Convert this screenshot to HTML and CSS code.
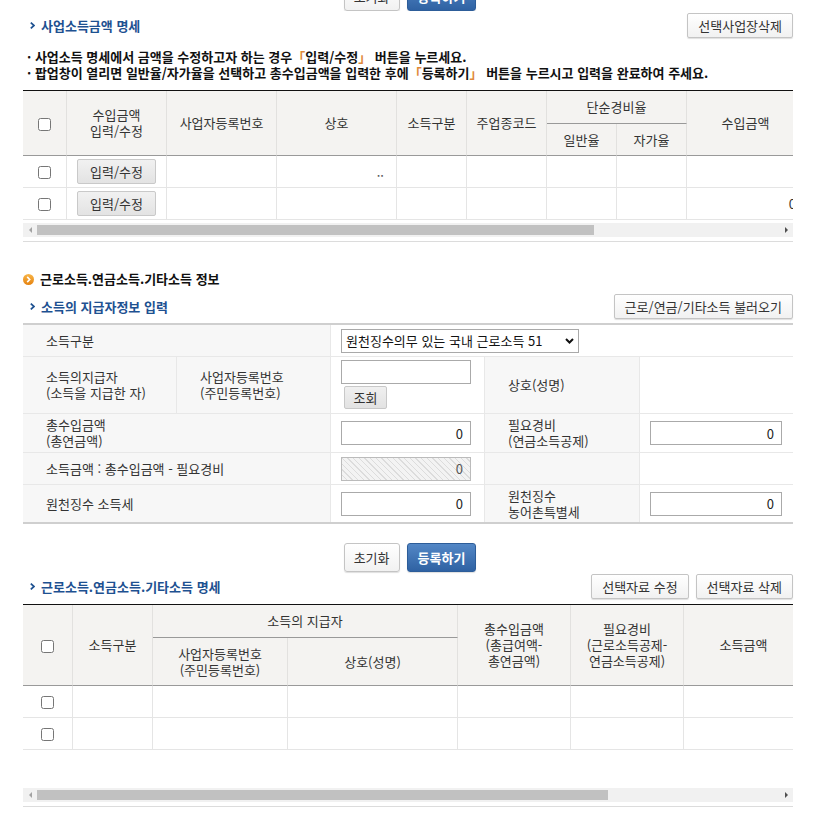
FILE: index.html
```html
<!DOCTYPE html>
<html lang="ko">
<head>
<meta charset="utf-8">
<title>소득금액 입력</title>
<link rel="stylesheet" href="styles.css">
</head>
<body>
<div class="page">
  <div class="btn-center cut">
    <button class="btn btn-lg">초기화</button>
    <button class="btn btn-lg btn-blue">등록하기</button>
  </div>

  <div class="sub-head">
    <h3 class="sub-title"><svg class="chev" width="5" height="7" viewBox="0 0 5 7"><path d="M0.8 0.6L4 3.5L0.8 6.4" fill="none" stroke="#1e5191" stroke-width="1.7"/></svg>사업소득금액 명세</h3>
    <div class="btn-group"><button class="btn">선택사업장삭제</button></div>
  </div>

  <ul class="notes">
    <li>· 사업소득 명세에서 금액을 수정하고자 하는 경우<span class="br">「</span>입력/수정<span class="br">」</span> 버튼을 누르세요.</li>
    <li>· 팝업창이 열리면 일반율/자가율을 선택하고 총수입금액을 입력한 후에<span class="br">「</span>등록하기<span class="br">」</span> 버튼을 누르시고 입력을 완료하여 주세요.</li>
  </ul>

  <div class="grid-wrap">
    <div class="grid-view">
      <table class="grid grid-biz">
        <colgroup>
          <col class="w44"><col class="w100"><col class="w110"><col class="w120"><col class="w70"><col class="w80"><col class="w70"><col class="w70"><col class="w118"><col class="w120"><col class="w125">
        </colgroup>
        <thead>
          <tr class="hr-a">
            <th rowspan="2"><input type="checkbox"></th>
            <th rowspan="2">수입금액<br>입력/수정</th>
            <th rowspan="2">사업자등록번호</th>
            <th rowspan="2">상호</th>
            <th rowspan="2">소득구분</th>
            <th rowspan="2">주업종코드</th>
            <th colspan="2" class="grp">단순경비율</th>
            <th rowspan="2">수입금액</th>
            <th rowspan="2">필요경비</th>
            <th rowspan="2">소득금액</th>
          </tr>
          <tr class="hr-b">
            <th>일반율</th>
            <th>자가율</th>
          </tr>
        </thead>
        <tbody>
          <tr>
            <td><input type="checkbox"></td>
            <td><button class="btn-row">입력/수정</button></td>
            <td></td>
            <td class="num">..</td>
            <td></td><td></td><td></td><td></td>
            <td class="num"></td><td></td><td></td>
          </tr>
          <tr>
            <td><input type="checkbox"></td>
            <td><button class="btn-row">입력/수정</button></td>
            <td></td>
            <td></td>
            <td></td><td></td><td></td><td></td>
            <td class="num amt">0</td><td></td><td></td>
          </tr>
        </tbody>
      </table>
    </div>
    <div class="hscroll">
      <span class="arr arr-l"></span>
      <div class="track"><div class="thumb thumb-biz"></div></div>
      <span class="arr arr-r"></span>
    </div>
  </div>

  <h2 class="sec-title"><svg class="dot" width="11" height="11" viewBox="0 0 11 11"><defs><linearGradient id="og" x1="0" y1="0" x2="0" y2="1"><stop offset="0" stop-color="#f8b548"/><stop offset="1" stop-color="#e5820f"/></linearGradient></defs><circle cx="5.5" cy="5.5" r="5.5" fill="url(#og)"/><path d="M4.2 2.9L6.7 5.5L4.2 8.1" fill="none" stroke="#fff" stroke-width="1.6"/></svg>근로소득.연금소득.기타소득 정보</h2>

  <div class="sub-head sub-head-2">
    <h3 class="sub-title"><svg class="chev" width="5" height="7" viewBox="0 0 5 7"><path d="M0.8 0.6L4 3.5L0.8 6.4" fill="none" stroke="#1e5191" stroke-width="1.7"/></svg>소득의 지급자정보 입력</h3>
    <div class="btn-group"><button class="btn">근로/연금/기타소득 불러오기</button></div>
  </div>

  <table class="form">
    <colgroup>
      <col class="w154"><col class="w154"><col class="w154"><col class="w155"><col class="w153">
    </colgroup>
    <tbody>
      <tr class="r1">
        <th colspan="2">소득구분</th>
        <td colspan="3">
          <select class="sel">
            <option>원천징수의무 있는 국내 근로소득 51</option>
          </select>
        </td>
      </tr>
      <tr class="r2">
        <th>소득의지급자<br>(소득을 지급한 자)</th>
        <th>사업자등록번호<br>(주민등록번호)</th>
        <td class="top">
          <input class="inp" type="text" value="">
          <button class="btn-find">조회</button>
        </td>
        <th>상호(성명)</th>
        <td class="last"></td>
      </tr>
      <tr class="r3">
        <th colspan="2">총수입금액<br>(총연금액)</th>
        <td><input class="inp" type="text" value="0"></td>
        <th>필요경비<br>(연금소득공제)</th>
        <td class="last"><input class="inp inp-r" type="text" value="0"></td>
      </tr>
      <tr class="r4">
        <th colspan="2">소득금액 : 총수입금액 - 필요경비</th>
        <td><input class="inp inp-dis" type="text" value="0" disabled></td>
        <th></th>
        <td class="last"></td>
      </tr>
      <tr class="r5">
        <th colspan="2">원천징수 소득세</th>
        <td><input class="inp" type="text" value="0"></td>
        <th>원천징수<br>농어촌특별세</th>
        <td class="last"><input class="inp inp-r" type="text" value="0"></td>
      </tr>
    </tbody>
  </table>

  <div class="btn-center btn-center-2">
    <button class="btn btn-lg">초기화</button>
    <button class="btn btn-lg btn-blue">등록하기</button>
  </div>

  <div class="sub-head sub-head-3">
    <h3 class="sub-title"><svg class="chev" width="5" height="7" viewBox="0 0 5 7"><path d="M0.8 0.6L4 3.5L0.8 6.4" fill="none" stroke="#1e5191" stroke-width="1.7"/></svg>근로소득.연금소득.기타소득 명세</h3>
    <div class="btn-group">
      <button class="btn">선택자료 수정</button>
      <button class="btn">선택자료 삭제</button>
    </div>
  </div>

  <div class="grid-wrap grid-wrap-2">
    <div class="grid-view grid-view-2">
      <table class="grid grid-inc">
        <colgroup>
          <col class="w50"><col class="w80"><col class="w135"><col class="w170"><col class="w113"><col class="w113"><col class="w120"><col class="w110"><col class="w111">
        </colgroup>
        <thead>
          <tr class="hr-a2">
            <th rowspan="2"><input type="checkbox"></th>
            <th rowspan="2">소득구분</th>
            <th colspan="2" class="grp">소득의 지급자</th>
            <th rowspan="2">총수입금액<br>(총급여액-<br>총연금액)</th>
            <th rowspan="2">필요경비<br>(근로소득공제-<br>연금소득공제)</th>
            <th rowspan="2">소득금액</th>
            <th rowspan="2">원천징수<br>소득세</th>
            <th rowspan="2">원천징수<br>농어촌특별세</th>
          </tr>
          <tr class="hr-b2">
            <th>사업자등록번호<br>(주민등록번호)</th>
            <th>상호(성명)</th>
          </tr>
        </thead>
        <tbody>
          <tr>
            <td><input type="checkbox"></td>
            <td></td><td></td><td></td><td></td><td></td><td></td><td></td><td></td>
          </tr>
          <tr>
            <td><input type="checkbox"></td>
            <td></td><td></td><td></td><td></td><td></td><td></td><td></td><td></td>
          </tr>
        </tbody>
      </table>
    </div>
    <div class="hscroll">
      <span class="arr arr-l"></span>
      <div class="track"><div class="thumb thumb-inc"></div></div>
      <span class="arr arr-r"></span>
    </div>
  </div>
</div>
</body>
</html>
```

FILE: styles.css
```css
* { box-sizing: border-box; }

body {
  margin: 0;
  background: #fff;
  color: #333;
  font-family: "Noto Sans CJK KR", "Noto Sans", sans-serif;
  font-size: 13px;
  line-height: 16px;
}

.page {
  width: 770px;
  margin-left: 23px;
}

button, input, select {
  font-family: "Noto Sans CJK KR", "Noto Sans", sans-serif;
  font-size: 13px;
}

/* buttons */
.btn {
  height: 25px;
  padding: 0 10px;
  border: 1px solid #c4c4c4;
  border-radius: 2px;
  background: linear-gradient(#ffffff, #f1f1f1);
  box-shadow: 0 1px 1px rgba(0, 0, 0, 0.13);
  color: #333;
  line-height: 23px;
  white-space: nowrap;
}

.btn-lg {
  height: 29px;
  padding: 0 9px;
  line-height: 27px;
  border-radius: 3px;
}

.btn-blue {
  padding: 0 10px;
  border-color: #2d5d99;
  background: linear-gradient(#5387c6, #2f62a3);
  color: #fff;
  font-weight: bold;
}

.btn-center {
  display: flex;
  justify-content: center;
  gap: 7px;
  padding-left: 4px;
}

.btn-center.cut {
  height: 11px;
  overflow: hidden;
  align-items: flex-end;
}

.btn-center-2 {
  margin-top: 19px;
}

.btn-group {
  display: flex;
  gap: 7px;
}

/* sub headings */
.sub-head {
  display: flex;
  justify-content: space-between;
  align-items: center;
  height: 25px;
  margin-top: 2px;
}

.sub-head-2 { margin-top: 7px; }
.sub-head-3 { margin-top: 2px; }

.sub-title {
  display: flex;
  align-items: center;
  margin: 0;
  color: #1e5191;
  font-size: 13px;
  font-weight: bold;
}

.chev {
  margin-left: 7px;
  margin-right: 6px;
}

.sec-title {
  display: flex;
  align-items: center;
  margin: 29px 0 0;
  color: #111;
  font-size: 13px;
  font-weight: bold;
  line-height: 16px;
}

.dot {
  margin-right: 6px;
}

/* notes */
.notes {
  list-style: none;
  margin: 11px 0 9px;
  padding: 0 0 0 4px;
  color: #111;
  font-weight: bold;
  line-height: 16px;
}

.br {
  color: #e0893a;
}

/* grids */
.grid-wrap {
  border-top: 1px solid #111;
  border-bottom: 1px solid #dcdcdc;
}

.grid-view {
  overflow: hidden;
}

.grid-view-2 {
  height: 180px;
}

.grid {
  table-layout: fixed;
  border-collapse: separate;
  border-spacing: 0;
}

.grid-biz { width: 1027px; }
.grid-inc { width: 1002px; }

.w44 { width: 44px; }
.w50 { width: 50px; }
.w70 { width: 70px; }
.w80 { width: 80px; }
.w100 { width: 100px; }
.w110 { width: 110px; }
.w111 { width: 111px; }
.w113 { width: 113px; }
.w118 { width: 118px; }
.w120 { width: 120px; }
.w125 { width: 125px; }
.w135 { width: 135px; }
.w153 { width: 153px; }
.w154 { width: 154px; }
.w155 { width: 155px; }
.w170 { width: 170px; }

.grid th {
  padding: 0;
  background: #f4f3f1;
  border-right: 1px solid #e2e1df;
  border-bottom: 1px solid #999;
  color: #333;
  font-weight: normal;
  text-align: center;
  vertical-align: middle;
  line-height: 16px;
}

.grid th.grp {
  border-bottom: 1px solid #999;
}

.grid .hr-a { height: 33px; }
.grid .hr-b { height: 32px; }
.grid .hr-a2 { height: 33px; }
.grid .hr-b2 { height: 48px; }

.grid td {
  height: 32px;
  padding: 0;
  border-right: 1px solid #e5e5e5;
  border-bottom: 1px solid #e5e5e5;
  text-align: center;
  vertical-align: middle;
}

.grid td.num {
  text-align: right;
  padding-right: 12px;
  color: #555;
}

.grid td.amt {
  padding-right: 8px;
  color: #333;
}

.grid input[type="checkbox"] {
  margin: 0;
  width: 13px;
  height: 13px;
  vertical-align: middle;
}

.btn-row {
  width: 79px;
  height: 25px;
  border: 1px solid #c9c9c9;
  border-radius: 2px;
  background: linear-gradient(#f1f1f1, #e3e3e3);
  color: #333;
  line-height: 23px;
  padding: 0;
}

/* fake horizontal scrollbar */
.hscroll {
  display: flex;
  align-items: center;
  height: 14px;
  margin: 3px 0 4px;
  background: #f1f1f1;
}

.arr {
  display: flex;
  width: 14px;
  height: 14px;
  align-items: center;
  justify-content: center;
}

.arr::before {
  content: "";
  width: 0;
  height: 0;
  border-top: 3px solid transparent;
  border-bottom: 3px solid transparent;
}

.arr-l::before {
  border-right: 3px solid #a3a3a3;
}

.arr-r::before {
  border-left: 3px solid #505050;
}

.track {
  flex: 1;
  height: 10px;
}

.thumb {
  height: 10px;
  background: #c1c1c1;
}

.thumb-biz { width: 557px; }
.thumb-inc { width: 571px; }

.grid-wrap-2 {
  margin-top: 5px;
}

/* form */
.form {
  width: 770px;
  margin-top: 4px;
  table-layout: fixed;
  border-collapse: separate;
  border-spacing: 0;
  border-top: 2px solid #cfcfcf;
  border-bottom: 2px solid #cfcfcf;
}

.form th,
.form td {
  padding: 0;
  border-right: 1px solid #e8e8e8;
  border-bottom: 1px solid #e8e8e8;
  vertical-align: middle;
  line-height: 16px;
}

.form th {
  padding-left: 23px;
  background: #f7f7f7;
  color: #333;
  font-weight: normal;
  text-align: left;
}

.form td {
  padding-left: 10px;
  background: #fff;
}

.form td.last,
.form tr.r1 td {
  border-right: none;
}

.form tr.r5 th,
.form tr.r5 td {
  border-bottom: none;
}

.form .r1 { height: 32px; }
.form .r2 { height: 57px; }
.form .r3 { height: 39px; }
.form .r4 { height: 32px; }
.form .r5 { height: 37px; }

.form td.top {
  vertical-align: top;
  padding-top: 3px;
}

.sel {
  display: block;
  width: 238px;
  height: 24px;
  padding: 0 20px 0 4px;
  border: 1px solid #a9a9a9;
  border-radius: 0;
  background: #fff url("data:image/svg+xml,%3Csvg xmlns='http://www.w3.org/2000/svg' width='9' height='6' viewBox='0 0 9 6'%3E%3Cpath d='M1 1l3.5 3.5L8 1' fill='none' stroke='%23111' stroke-width='2'/%3E%3C/svg%3E") no-repeat right 4px center;
  color: #111;
  -webkit-appearance: none;
  appearance: none;
}

.inp {
  display: block;
  width: 130px;
  height: 24px;
  padding: 0 7px 0 4px;
  border: 1px solid #aaa;
  border-radius: 0;
  background: #fff;
  color: #222;
  text-align: right;
  outline: none;
}

.inp-r {
  width: 132px;
}

.inp-dis {
  border-color: #bbb;
  background: repeating-linear-gradient(45deg, #f3f3f3 0, #f3f3f3 3px, #dcdcdc 3px, #dcdcdc 4px);
  color: #555;
}

.btn-find {
  display: block;
  width: 43px;
  height: 23px;
  margin: 2px 0 0 3px;
  padding: 0;
  border: 1px solid #c8c8c8;
  border-radius: 2px;
  background: linear-gradient(#f0f0f0, #e2e2e2);
  color: #333;
  line-height: 21px;
}
```
